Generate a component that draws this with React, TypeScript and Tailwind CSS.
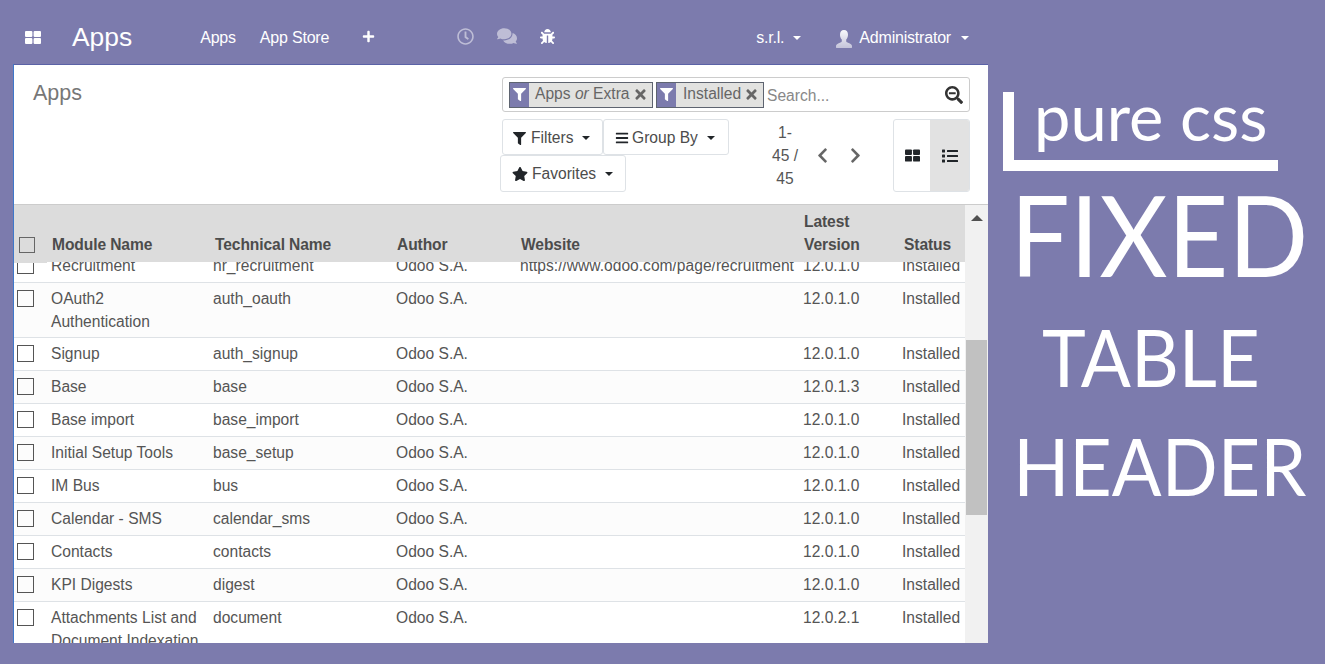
import { FaPlus, FaRegClock, FaComments, FaBug, FaFilter, FaTimes, FaSearchMinus, FaBars, FaStar, FaList, FaChevronLeft, FaChevronRight } from "react-icons/fa";

const cols = "grid grid-cols-[33px_162px_183px_124px_283px_99px_67px]";

const rows: [string[], string, string][] = [
  [["OAuth2", "Authentication"], "auth_oauth", "12.0.1.0"],
  [["Signup"], "auth_signup", "12.0.1.0"],
  [["Base"], "base", "12.0.1.3"],
  [["Base import"], "base_import", "12.0.1.0"],
  [["Initial Setup Tools"], "base_setup", "12.0.1.0"],
  [["IM Bus"], "bus", "12.0.1.0"],
  [["Calendar - SMS"], "calendar_sms", "12.0.1.0"],
  [["Contacts"], "contacts", "12.0.1.0"],
  [["KPI Digests"], "digest", "12.0.1.0"],
  [["Attachments List and", "Document Indexation"], "document", "12.0.2.1"],
];

function ThLarge({ w, h, className }: { w: number; h: number; className?: string }) {
  return (
    <svg width={w} height={h} viewBox="0 0 16 13" className={className} fill="currentColor">
      <rect x="0" y="0" width="7.4" height="6" rx="1" />
      <rect x="8.6" y="0" width="7.4" height="6" rx="1" />
      <rect x="0" y="7" width="7.4" height="6" rx="1" />
      <rect x="8.6" y="7" width="7.4" height="6" rx="1" />
    </svg>
  );
}

function Bust() {
  return (
    <svg width="16" height="18" viewBox="0 0 16 18" className="ml-[35px] mt-[1px]">
      <defs>
        <linearGradient id="bust" x1="0" y1="0" x2="0" y2="1">
          <stop offset="0" stopColor="#ffffff" stopOpacity="0.95" />
          <stop offset="1" stopColor="#ffffff" stopOpacity="0.55" />
        </linearGradient>
      </defs>
      <path fill="url(#bust)" d="M8 0c2.6 0 4 2 4 4.8 0 2-.8 3.8-1.8 4.8v1.6c0 .8 1 1.2 2.4 1.7 1.7.6 3.4 1.4 3.4 3v1.6c0 .3-.2.5-.5.5H.5c-.3 0-.5-.2-.5-.5v-1.6c0-1.6 1.7-2.4 3.4-3 1.4-.5 2.4-.9 2.4-1.7V9.6C4.800 8.600 4 6.800 4 4.800 4 2 5.400 0 8 0z" />
    </svg>
  );
}

function Box({ size }: { size: "h" | "r" }) {
  return <div className={`${size === "h" ? "w-[16px] h-[16px] border-[#666]" : "w-[17px] h-[17px] border-[#555]"} border bg-transparent`} />;
}

function Row({ name, tech, site, ver, even }: { name: string[]; tech: string; site: string; ver: string; even: boolean }) {
  return (
    <div className={`${cols} border-b border-[#dee2e6] leading-[23px] ${even ? "bg-[#fcfcfc]" : "bg-white"}`}>
      <div className="pl-[3px] pt-[7px]"><Box size="r" /></div>
      <div className={`px-[4px] pt-[4px] ${name.length > 1 ? "pb-[4px]" : "pb-[5px]"}`}>{name.map((n) => <div key={n} className="whitespace-nowrap">{n}</div>)}</div>
      <div className="px-[4px] pt-[4px]">{tech}</div>
      <div className="px-[4px] pt-[4px]">Odoo S.A.</div>
      <div className="px-[4px] pt-[4px] whitespace-nowrap">{site}</div>
      <div className="px-[4px] pt-[4px]">{ver}</div>
      <div className="px-[4px] pt-[4px]">Installed</div>
    </div>
  );
}

function Facet({ children, w }: { children: React.ReactNode; w: string }) {
  return (
    <div className={`flex h-[26px] border border-[#5e6470] bg-[#e2e2e0] ${w}`}>
      <div className="w-[19px] shrink-0 bg-[#7c7bad] flex items-center justify-center text-white"><FaFilter size={13} /></div>
      <div className="flex-1 flex items-center justify-between pl-[6px] pr-[4px] text-[#666] leading-none pb-[2px]">{children}<FaTimes size={15} className="text-[#666] mt-[2px]" /></div>
    </div>
  );
}

function Btn({ icon, label, cls, gap }: { icon: React.ReactNode; label: string; cls: string; gap: string }) {
  return (
    <div className={`flex items-center border border-[#dee2e6] rounded-[3px] bg-white text-[#4c4c4c] ${cls}`}>
      {icon}
      <span className={gap}>{label}</span>
      <span className="ml-[9px] w-0 h-0 border-x-[4.5px] border-x-transparent border-t-[4.5px] border-t-[#212529]" />
    </div>
  );
}

export default function App() {
  return (
    <div className="w-[1325px] h-[664px] overflow-hidden bg-[#7c7bad] flex text-[15.6px] text-[#555]" style={{ fontFamily: '"Liberation Sans", Arial, sans-serif' }}>
      <div className="w-[988px] shrink-0 flex flex-col">
        <header className="h-[64px] shrink-0 flex items-center text-white pt-[12px] text-[16px] tracking-[-0.2px]">
          <ThLarge w={16} h={13} className="ml-[25px] mb-[2px]" />
          <span className="ml-[31px] text-[26.4px] leading-none tracking-normal mb-[2px]">Apps</span>
          <span className="ml-[68px]">Apps</span>
          <span className="ml-[24px]">App Store</span>
          <FaPlus size={13} className="ml-[33px] mb-[3px]" />
          <FaRegClock size={17} className="ml-[82px] text-white/50 mb-[4px]" />
          <FaComments size={20} className="ml-[23px] text-white/50 mb-[4px]" />
          <FaBug size={15} className="ml-[23px] mb-[3px]" />
          <span className="ml-[201px]">s.r.l.</span>
          <span className="ml-[9px] w-0 h-0 border-x-[4.5px] border-x-transparent border-t-[4.5px] border-t-white" />
          <Bust />
          <span className="ml-[7px]">Administrator</span>
          <span className="ml-[10px] w-0 h-0 border-x-[4.5px] border-x-transparent border-t-[4.5px] border-t-white" />
        </header>
        <main className="ml-[14px] w-[974px] h-[579px] bg-white flex flex-col border-t border-t-[#5b62a6] shadow-[-1px_0_0_#3f78c9]">
          <section className="h-[140px] shrink-0 flex border-b border-[#ccc] relative">
            <div className="w-[486px] pl-[19px] pt-[16px] text-[21.500px] leading-[24px] text-[#777]">Apps</div>
            <div className="w-[470px] flex flex-col">
              <div className="mt-[12px] h-[35px] ml-[2px] border border-[#ccc] rounded-[3px] flex items-center pl-[6px] gap-[3px]">
                <Facet w="w-[144px]"><span>Apps <i>or</i> Extra</span></Facet>
                <Facet w="w-[108px]"><span className="pl-[1px]">Installed</span></Facet>
                <span className="text-[#888] flex-1 mt-[2px]">Search...</span>
                <FaSearchMinus size={18} className="mr-[6px] text-[#333]" />
              </div>
              <div className="flex mt-[7px] h-[73px]">
                <div className="w-[268px] relative">
                  <div className="flex ml-[2px]">
                    <Btn cls="w-[101px] h-[36px] pl-[10px] pt-[2px]" gap="ml-[5px]" icon={<FaFilter size={13} className="text-[#212529]" />} label="Filters" />
                    <Btn cls="w-[126px] h-[36px] pl-[11px] pt-[2px]" gap="ml-[3px]" icon={<FaBars size={14} className="text-[#212529]" />} label="Group By" />
                  </div>
                  <Btn cls="w-[126px] h-[37px] pl-[11px]" gap="ml-[4px]" icon={<FaStar size={16} className="text-[#212529]" />} label="Favorites" />
                </div>
                <div className="w-[52px] text-center leading-[23px] ml-[-9px] pt-[2px] shrink-0">
                  <div>1-</div><div>45 /</div><div>45</div>
                </div>
                <div className="flex items-center gap-[16px] ml-[3px] h-[72px] text-[#666]">
                  <FaChevronLeft size={17} />
                  <FaChevronRight size={17} />
                </div>
                <div className="ml-[29px] w-[77px] h-[73px] border border-[#dee2e6] rounded-[3px] flex overflow-hidden">
                  <div className="w-[36px] flex items-center justify-center text-[#212529]"><ThLarge w={15} h={13} /></div>
                  <div className="flex-1 bg-[#e2e2e2] flex items-center justify-center text-[#212529]"><FaList size={16} /></div>
                </div>
              </div>
            </div>
          </section>
          <section className="flex-1 min-h-0 flex">
            <div className="w-[951px] overflow-hidden flex flex-col">
              <div className={`${cols} h-[57px] bg-[#dcdcdc] font-bold text-[#4c4c4c] leading-[23px] shrink-0 relative z-10 items-end tracking-[-0.1px]`}>
                <div className="pl-[5px] pb-[10px] self-stretch flex items-end bg-[#dcdcdc] mb-[-1px]"><Box size="h" /></div>
                <div className="pl-[5px] pb-[6px]">Module Name</div>
                <div className="pl-[6px] pb-[6px]">Technical Name</div>
                <div className="pl-[5px] pb-[6px]">Author</div>
                <div className="pl-[5px] pb-[6px]">Website</div>
                <div className="pl-[5px] pb-[6px]">Latest Version</div>
                <div className="pl-[6px] pb-[6px]">Status</div>
              </div>
              <div className="mt-[-12px]">
                <Row name={["Recruitment"]} tech="hr_recruitment" site="https://www.odoo.com/page/recruitment" ver="12.0.1.0" even={false} />
                {rows.map((r, i) => <Row key={i} name={r[0]} tech={r[1]} site="" ver={r[2]} even={i % 2 === 0} />)}
              </div>
            </div>
            <div className="w-[23px] bg-[#f1f1f1] flex flex-col items-center">
              <span className="mt-[10px] w-0 h-0 border-x-[6px] border-x-transparent border-b-[6px] border-b-[#505050]" />
              <div className="mt-[119px] w-[21px] h-[175px] bg-[#c1c1c1]" />
            </div>
          </section>
        </main>
      </div>
      <aside className="flex-1 flex flex-col text-white" style={{ fontFamily: "Lato, sans-serif" }}>
        <div className="mt-[92px] ml-[15px] w-[275px] h-[79px] border-l-[11px] border-b-[11px] border-white">
          <div className="ml-[20px] mt-[-1px] text-[65px] leading-[50px] whitespace-nowrap">pure css</div>
        </div>
        <div className="text-center text-[112px] leading-[120px] mt-[3px] pl-[6px] scale-x-[0.94]">FIXED</div>
        <div className="text-center text-[80px] leading-[100px] mt-[12px] pr-[12px] scale-x-[0.927]">TABLE</div>
        <div className="text-center text-[80px] leading-[100px] mt-[9px] pl-[7px] scale-x-[0.92]">HEADER</div>
      </aside>
    </div>
  );
}
